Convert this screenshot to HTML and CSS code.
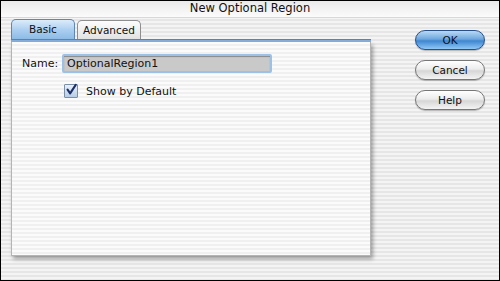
FILE: index.html
```html
<!DOCTYPE html>
<html lang="en">
<head>
<meta charset="UTF-8">
<title>New Optional Region</title>
<link rel="stylesheet" href="styles.css">
</head>
<body>

<div class="win">
  <div class="titlebar">New Optional Region</div>

  <div class="main">
    <div class="left">
      <div class="tabs">
        <div class="tab on">Basic</div>
        <div class="tab">Advanced</div>
      </div>
      <div class="tabline"></div>

      <section class="panel">
        <div class="field">
          <label class="lbl">Name:</label>
          <div class="input"><span class="sel">OptionalRegion1</span></div>
        </div>
        <div class="check">
          <span class="box">
            <svg width="14" height="14" viewBox="0 0 14 14">
              <path d="M3 6.5 L6 11 L12.5 1" fill="none" stroke="#1a2f6a" stroke-width="2.4" stroke-linecap="round" stroke-linejoin="round"/>
            </svg>
          </span>
          <span>Show by Default</span>
        </div>
      </section>
    </div>

    <div class="btns">
      <button class="pill ok">OK</button>
      <button class="pill">Cancel</button>
      <button class="pill">Help</button>
    </div>
  </div>
</div>

</body>
</html>
```

FILE: styles.css
```css
*{box-sizing:border-box}
body{margin:0;font-family:"DejaVu Sans",sans-serif;color:#111}
.win{width:500px;height:281px;border:1px solid #000;background:repeating-linear-gradient(#f4f4f4 0 2px,#e6e6e6 2px 4px);overflow:hidden}
.titlebar{height:17px;line-height:15px;text-align:center;font-size:11.5px;color:#111;background:linear-gradient(#eaeaea,#f6f6f6 70%,#fbfbfb);border-bottom:1px solid #d8d8d8}
.main{display:flex;padding-left:10px}
.left{width:360px;margin-top:1px}
.tabs{display:flex;align-items:flex-end;gap:2px;height:20px}
.tab{width:64px;height:19px;font-size:10.5px;text-align:center;line-height:18px;border:1px solid #8e8e8e;border-bottom:0;border-radius:5px 5px 0 0;background:linear-gradient(#fdfdfd,#e2e2e2)}
.tab.on{height:20px;border-color:#5f86b6;background:linear-gradient(#dcecfa,#a9cdef 55%,#8dbbe6)}
.tabline{height:3px;background:#87aedb;border-top:1px solid #5d82b2}
.panel{height:214px;padding:12px 10px;border:1px solid #b4b4b4;border-top:0;background:repeating-linear-gradient(#fbfbfb 0 2px,#f0f0f0 2px 4px);box-shadow:2px 3px 4px rgba(0,0,0,.35)}
.field{display:flex;align-items:center;gap:6px;font-size:11px}
.lbl{width:34px}
.input{width:210px;height:19px;padding:1px 3px;border:2px solid #9cc1e6;border-radius:2px;background:#c9c9c9;box-shadow:inset 0 1px 1px #888}
.sel{line-height:13px}
.check{display:flex;align-items:center;gap:8px;margin:11px 0 0 42px;font-size:11px}
.box{width:14px;height:14px;border:1px solid #7b8fa8;background:linear-gradient(#e8f0fa,#b7cde6);display:flex;align-items:center;justify-content:center;border-radius:1px}
.box svg{margin-top:-2px}
.btns{display:flex;flex-direction:column;gap:10px;margin:12px 0 0 44px}
.pill{width:70px;height:20px;padding:0;border:1px solid #777;border-radius:10px;font:10.5px "DejaVu Sans",sans-serif;color:#111;background:linear-gradient(#fff,#ececec 45%,#d6d6d6 55%,#f4f4f4);box-shadow:0 1px 1px rgba(0,0,0,.25)}
.pill.ok{border-color:#27508a;background:linear-gradient(#b9d9f5,#6ea7de 45%,#3f86d0 55%,#8ec8f6)}
```
